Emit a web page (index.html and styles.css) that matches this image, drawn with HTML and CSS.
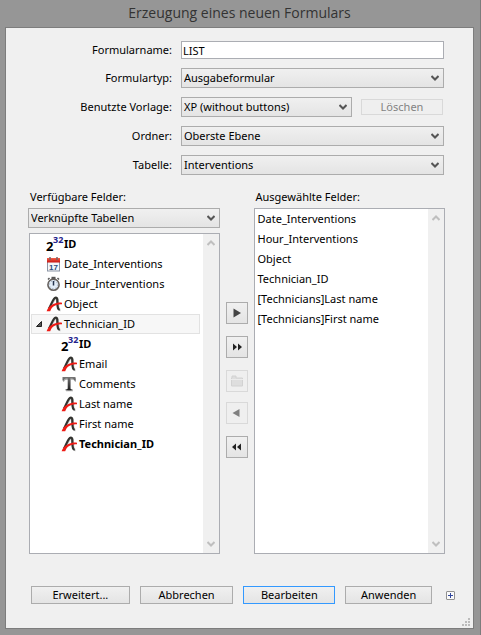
FILE: index.html
```html
<!DOCTYPE html>
<html lang="de">
<head>
<meta charset="utf-8">
<title>Erzeugung eines neuen Formulars</title>
<link rel="stylesheet" href="styles.css">
</head>
<body>
<svg class="sprite" aria-hidden="true">
  <defs>
    <linearGradient id="ink" x1="0" y1="0" x2="0" y2="1"><stop offset="0" stop-color="#777"/><stop offset="1" stop-color="#1c1c1c"/></linearGradient>
    <linearGradient id="red" x1="0" y1="0" x2="0" y2="1"><stop offset="0" stop-color="#f2604a"/><stop offset="1" stop-color="#c81410"/></linearGradient>
  </defs>
  <symbol id="chevron" viewBox="0 0 8 6"><path d="M0.5 1 4 4.500 7.500 1" fill="none" stroke="currentColor" stroke-width="2"/></symbol>
  <symbol id="alpha" viewBox="0 0 16 16">
    <path d="M3.500 13C5.500 9.500 6.800 5.500 8.500 3.300C9.700 1.700 11.500 1.800 11.700 3.700C12 6.500 11.600 10 12.500 12.700Q12.900 14.100 14.500 14" fill="none" stroke="#c4c4c4" stroke-width="2.400"/>
    <path d="M3 12.500C5 9 6.300 5 8 2.800C9.200 1.200 11 1.300 11.200 3.200C11.500 6 11.100 9.500 12 12.200Q12.400 13.600 13.800 13.500" fill="none" stroke="#33332f" stroke-width="2.200"/>
    <path d="M0.600 15.200C1.600 12 4 9.600 7 8.200C10 6.900 13 6.300 16 6.800V8.300C12.500 8 9.500 9 7 10.800C5.500 11.900 5 13.500 4.200 15.200Z" fill="#ed1c16"/>
  </symbol>
  <symbol id="text" viewBox="0 0 16 16">
    <path d="M1.500 1.500H14.500V5H13.500Q13 3 11 3H9.300V12.500Q9.300 13.700 11.500 13.800V14.500H4.500V13.800Q6.700 13.700 6.700 12.500V3H5Q3 3 2.500 5H1.500Z" fill="#aaa" transform="translate(0.500 0.700)"/>
    <path d="M1.500 1H14.500V4.500H13.500Q13 2.600 11 2.600H9.300V12.500Q9.300 13.500 11.500 13.500V14.200H4.500V13.500Q6.700 13.500 6.700 12.500V2.600H5Q3 2.600 2.500 4.500H1.500Z" fill="url(#ink)"/>
  </symbol>
  <symbol id="clock" viewBox="0 0 16 16">
    <path d="M5.500 0.800H9.500V3H5.500Z" fill="#555"/>
    <path d="M2 3.500 3.500 2M13 3.500 11.500 2" stroke="#555" stroke-width="1.500"/>
    <circle cx="7.500" cy="8.700" r="5.600" fill="#e3edf8" stroke="#66615e" stroke-width="1.600"/>
    <circle cx="7.500" cy="8.700" r="4" fill="none" stroke="#8e9aab" stroke-width="1" stroke-dasharray="1 2.140"/>
    <path d="M7.500 5V9.500" stroke="#26344f" stroke-width="1.500"/>
  </symbol>
</svg>

<h1 class="title">Erzeugung eines neuen Formulars</h1>
<main class="panel">
  <form class="form">
    <label for="name">Formularname:</label>
    <input class="field" id="name" type="text" value="LIST">

    <label for="type">Formulartyp:</label>
    <span class="combo"><select id="type"><option>Ausgabeformular</option></select><svg><use href="#chevron"/></svg></span>

    <label for="template">Benutzte Vorlage:</label>
    <div class="with-button">
      <span class="combo"><select id="template"><option>XP (without buttons)</option></select><svg><use href="#chevron"/></svg></span>
      <button class="button small" type="button" disabled>Löschen</button>
    </div>

    <label for="folder">Ordner:</label>
    <span class="combo"><select id="folder"><option>Oberste Ebene</option></select><svg><use href="#chevron"/></svg></span>

    <label for="table">Tabelle:</label>
    <span class="combo"><select id="table"><option>Interventions</option></select><svg><use href="#chevron"/></svg></span>
  </form>

  <div class="fields">
    <section class="column">
      <label class="heading" for="source">Verfügbare Felder:</label>
      <span class="combo"><select id="source"><option>Verknüpfte Tabellen</option></select><svg><use href="#chevron"/></svg></span>
      <div class="list available">
        <ul class="rows tree">
          <li class="key"><span class="int32"><span class="base">2</span><span class="exponent">32</span></span>ID</li>
          <li>
            <svg class="icon" viewBox="0 0 16 16">
              <rect x="1.500" y="5" width="12" height="10" fill="#f4f6f9" stroke="#8b95a5"/>
              <path d="M1 2H14V6.500H1Z" fill="url(#red)"/>
              <path d="M4 1V4M11 1V4" stroke="#7a6468" stroke-width="1.500"/>
              <text x="7.500" y="13.500" text-anchor="middle" class="day">17</text>
            </svg>Date_Interventions</li>
          <li><svg class="icon"><use href="#clock"/></svg>Hour_Interventions</li>
          <li><svg class="icon"><use href="#alpha"/></svg>Object</li>
          <li class="open"><svg class="expander" viewBox="0 0 6 6"><path d="M5.500 0.500V5.500H0.500Z" fill="#555" stroke="#222"/></svg><svg class="icon"><use href="#alpha"/></svg>Technician_ID</li>
          <li class="child key"><span class="int32"><span class="base">2</span><span class="exponent">32</span></span>ID</li>
          <li class="child"><svg class="icon"><use href="#alpha"/></svg>Email</li>
          <li class="child"><svg class="icon"><use href="#text"/></svg>Comments</li>
          <li class="child"><svg class="icon"><use href="#alpha"/></svg>Last name</li>
          <li class="child"><svg class="icon"><use href="#alpha"/></svg>First name</li>
          <li class="child key"><svg class="icon"><use href="#alpha"/></svg>Technician_ID</li>
        </ul>
        <div class="scroll"><svg class="up"><use href="#chevron"/></svg><svg><use href="#chevron"/></svg></div>
      </div>
    </section>

    <div class="transfer">
      <div class="group">
        <button class="button" type="button" aria-label="Hinzufügen"><svg viewBox="0 0 12 12"><path d="M2.500 1.500 10 6 2.500 10.500Z" fill="#444"/></svg></button>
        <button class="button" type="button" aria-label="Alle hinzufügen"><svg viewBox="0 0 12 12"><path d="M2 2.500 6 6 2 9.500ZM7 2.500 11 6 7 9.500Z" fill="#222"/></svg></button>
        <button class="button" type="button" aria-label="Ordner" disabled><svg viewBox="0 0 12 12"><path d="M1 1H5V3H11.500V11H0.500V3H1Z" fill="#dedede" stroke="#d2d2d2"/><path d="M0 4.500H12" stroke="#ececec"/></svg></button>
      </div>
      <div class="group">
        <button class="button" type="button" aria-label="Entfernen" disabled><svg viewBox="0 0 12 12"><path d="M8.500 2 1.500 6 8.500 10Z" fill="#808080"/></svg></button>
        <button class="button" type="button" aria-label="Alle entfernen"><svg viewBox="0 0 12 12"><path d="M5 2.500 1 6 5 9.500ZM10 2.500 6 6 10 9.500Z" fill="#222"/></svg></button>
      </div>
    </div>

    <section class="column">
      <h2 class="heading">Ausgewählte Felder:</h2>
      <div class="list">
        <ul class="rows">
          <li>Date_Interventions</li>
          <li>Hour_Interventions</li>
          <li>Object</li>
          <li>Technician_ID</li>
          <li>[Technicians]Last name</li>
          <li>[Technicians]First name</li>
        </ul>
        <div class="scroll"><svg class="up"><use href="#chevron"/></svg><svg><use href="#chevron"/></svg></div>
      </div>
    </section>
  </div>

  <footer class="actions">
    <button class="button" type="button">Erweitert...</button>
    <button class="button" type="button">Abbrechen</button>
    <button class="button primary" type="button">Bearbeiten</button>
    <button class="button" type="button">Anwenden</button>
    <button class="plus" type="button" aria-label="Mehr"><svg viewBox="0 0 9 9"><rect x="0.500" y="0.500" width="8" height="8" rx="0.500" fill="#fafafa" stroke="#919191"/><path d="M2 4.500H7M4.500 2V7" stroke="#31479e"/></svg></button>
  </footer>
  <svg class="grip" viewBox="0 0 8 8" aria-hidden="true"><path d="M6 0h2v2h-2zM3 3h2v2h-2zM6 3h2v2h-2zM0 6h2v2h-2zM3 6h2v2h-2zM6 6h2v2h-2z" fill="#bcbcbc"/></svg>
</main>
</body>
</html>
```

FILE: styles.css
```css
* { box-sizing: border-box; }

body {
  margin: 0;
  min-height: 100vh;
  display: flex;
  flex-direction: column;
  padding: 0 6px 6px 5px;
  background: #969696;
  border-right: 1px solid #7c7c7c;
  color: #000;
  font: 11px/16px "Noto Sans", "Open Sans", sans-serif;
}

.sprite { position: absolute; width: 0; height: 0; }

.title {
  margin: 0;
  height: 27px;
  font-family: "Open Sans", "Noto Sans", sans-serif;
  font-size: 14px;
  font-weight: 400;
  line-height: 26px;
  text-align: center;
  color: #333;
}

.panel {
  position: relative;
  flex: 1;
  display: flex;
  flex-direction: column;
  padding: 13px 28px 24px 22px;
  background: #f0f0f0;
  border: 1px solid #7d7d7d;
}

.form {
  display: grid;
  grid-template-columns: 144px 1fr;
  gap: 9px;
  align-items: center;
  padding-right: 1px;
}
.form label { text-align: right; white-space: nowrap; }

.field {
  width: 100%;
  height: 18px;
  padding: 0 1px;
  border: 1px solid #abadb3;
  background: #fff;
  font: inherit;
}

.combo { display: grid; align-items: center; }
.combo select {
  grid-area: 1 / 1;
  width: 100%;
  height: 20px;
  padding: 0 20px 0 2px;
  appearance: none;
  border: 1px solid #acacac;
  border-radius: 0;
  background: linear-gradient(#f0f0f0, #e4e4e4);
  color: #000;
  font: inherit;
}
.combo svg {
  grid-area: 1 / 1;
  justify-self: end;
  width: 8px;
  height: 6px;
  margin-right: 5px;
  color: #555;
  pointer-events: none;
}

.with-button { display: flex; align-items: center; gap: 9px; padding-right: 1px; }
.with-button .combo { flex: 1; }

.button {
  padding: 0;
  border: 1px solid #acacac;
  background: linear-gradient(#f0f0f0, #e4e4e4);
  color: #000;
  font: inherit;
  line-height: 14px;
}
.button:disabled { border-color: #d9d9d9; background: #efefef; color: #838383; }
.small { width: 82px; height: 16px; line-height: 12px; }
.primary { border-color: #3399ff; }

.fields {
  flex: 1;
  display: grid;
  grid-template-columns: 1fr 22px 1fr;
  gap: 6px;
  padding-top: 14px;
}
.column { display: flex; flex-direction: column; }
.heading { margin: 0 0 3px 2px; font-size: 11px; font-weight: 400; line-height: 16px; }

.list {
  flex: 1;
  display: flex;
  border: 1px solid #abadb3;
  background: #fff;
}
.available { margin: 5px 0 0 1px; }
.rows { flex: 1; margin: 0; padding: 0; list-style: none; }
.rows li { height: 20px; padding-left: 3px; line-height: 20px; white-space: nowrap; }

.tree li {
  display: flex;
  align-items: center;
  margin: 0 3px 0 1px;
  padding-left: 15px;
}
.tree .child { padding-left: 30px; }
.tree .open { padding-left: 4px; border: 1px solid #e2e2e2; background: #f7f7f7; }
.tree .key { font-weight: 700; }
.expander { width: 6px; height: 6px; margin-right: 4px; }
.icon { width: 16px; height: 16px; margin-right: 2px; }
.day { font: bold 8px "Liberation Sans", sans-serif; fill: #2d4a7c; }

.int32 {
  display: flex;
  width: 18px;
  height: 20px;
  font-family: "Noto Sans", sans-serif;
}
.base { width: 7px; font-size: 13px; line-height: 24px; }
.exponent { font-size: 9px; line-height: 12px; color: #22228c; }

.scroll {
  width: 16px;
  display: flex;
  flex-direction: column;
  justify-content: space-between;
  align-items: center;
  padding: 6px 0;
  background: #f0f0f0;
  color: #bfbfbf;
}
.scroll svg { width: 8px; height: 6px; }
.scroll .up { transform: rotate(180deg); }

.transfer { display: flex; flex-direction: column; gap: 10px; padding-top: 113px; }
.group { display: grid; gap: 12px; }
.group .button { display: grid; place-items: center; height: 22px; }
.group svg { width: 12px; height: 12px; }

.actions {
  display: grid;
  grid-template-columns: 99fr 94fr 92fr 87fr auto;
  gap: 10px;
  align-items: center;
  padding: 32px 0 0 3px;
  margin-right: -10px;
}
.actions .button { height: 18px; }
.plus { width: 9px; height: 9px; margin-left: 4px; padding: 0; border: 0; background: none; }
.plus svg { display: block; width: 9px; height: 9px; }

.grip { position: absolute; right: 3px; bottom: 2px; width: 8px; height: 8px; }
```
